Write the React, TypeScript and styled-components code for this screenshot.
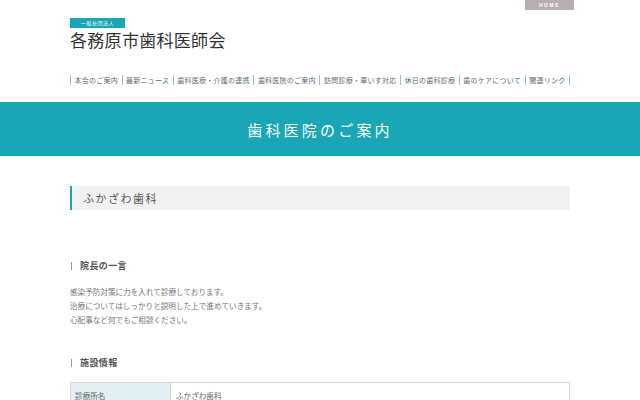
import styled, { createGlobalStyle } from "styled-components";

const teal = "#19a6b5";

const GlobalStyle = createGlobalStyle`
  html, body {
    margin: 0;
    padding: 0;
    background: #fff;
  }
  body {
    font-family: "Noto Sans CJK JP", "Noto Sans", sans-serif;
    color: #555;
  }
`;

const navItems = [
  "本会のご案内",
  "最新ニュース",
  "歯科医療・介護の連携",
  "歯科医院のご案内",
  "訪問診療・車いす対応",
  "休日の歯科診療",
  "歯のケアについて",
  "関連リンク",
];

const messageLines = [
  "感染予防対策に力を入れて診療しております。",
  "治療についてはしっかりと説明した上で進めていきます。",
  "心配事など何でもご相談ください。",
];

const Header = styled.header`
  width: 500px;
  margin: 0 auto;
`;

const TopRow = styled.div`
  display: flex;
  justify-content: space-between;
  align-items: flex-start;
`;

const Logo = styled.div`
  padding-top: 18px;
  display: flex;
  flex-direction: column;
  align-items: flex-start;
`;

const Badge = styled.span`
  display: block;
  width: 55px;
  height: 10px;
  line-height: 10px;
  background: ${teal};
  color: #fff;
  font-size: 5px;
  letter-spacing: 0.6px;
  text-align: center;
`;

const SiteTitle = styled.h1`
  margin: 2px 0 0;
  font-size: 17px;
  line-height: 20px;
  font-weight: 400;
  letter-spacing: 0.3px;
  color: #333;
`;

const HomeButton = styled.a`
  display: block;
  width: 49px;
  height: 10px;
  line-height: 10px;
  margin-right: -4px;
  background: #b8aeae;
  color: #fff;
  font-family: "Liberation Sans", sans-serif;
  font-size: 5px;
  font-weight: 700;
  letter-spacing: 1.5px;
  text-align: center;
`;

const Nav = styled.nav`
  display: flex;
  margin-top: 25px;
  border-right: 1px solid #7fcfd6;
`;

const NavItem = styled.a`
  flex: 1 1 auto;
  text-align: center;
  font-size: 7px;
  line-height: 10px;
  letter-spacing: 0.25px;
  color: #6a6a6a;
  border-left: 1px solid #7fcfd6;
  white-space: nowrap;
`;

const Band = styled.div`
  margin-top: 17px;
  height: 54px;
  background: ${teal};
  display: flex;
  align-items: center;
  justify-content: center;
`;

const BandTitle = styled.h2`
  margin: 0;
  color: #fff;
  font-size: 15px;
  font-weight: 400;
  letter-spacing: 3.2px;
`;

const Main = styled.main`
  width: 500px;
  margin: 30px auto 0;
`;

const ClinicName = styled.h3`
  margin: 0;
  height: 24px;
  line-height: 24px;
  background: #f1f1f1;
  border-left: 2px solid #1ba99f;
  padding-left: 11px;
  font-size: 11px;
  font-weight: 400;
  letter-spacing: 1.5px;
  color: #555;
`;

const SubHeading = styled.h4<{ $top: number }>`
  margin: ${(p) => p.$top}px 0 0;
  display: flex;
  align-items: center;
  gap: 8px;
  font-size: 9px;
  line-height: 10px;
  font-weight: 700;
  letter-spacing: 0.4px;
  color: #555;

  &::before {
    content: "";
    display: block;
    width: 1px;
    height: 8px;
    margin-left: 1px;
    background: #999;
  }
`;

const Message = styled.div`
  margin-top: 14px;
  font-size: 7.6px;
  line-height: 14px;
  color: #777;
`;

const InfoTable = styled.table`
  width: 100%;
  margin-top: 14px;
  border-collapse: collapse;
  table-layout: fixed;
  font-size: 7.6px;
  color: #666;
`;

const Th = styled.th`
  width: 91px;
  height: 24px;
  padding: 0 4px;
  text-align: left;
  font-weight: 400;
  background: #e0f0f3;
  border: 1px solid #d6d6d6;
`;

const Td = styled.td`
  padding: 0 5px;
  border: 1px solid #d6d6d6;
`;

export default function App() {
  return (
    <>
      <GlobalStyle />
      <Header>
        <TopRow>
          <Logo>
            <Badge>一般社団法人</Badge>
            <SiteTitle>各務原市歯科医師会</SiteTitle>
          </Logo>
          <HomeButton>HOME</HomeButton>
        </TopRow>
        <Nav>
          {navItems.map((item) => (
            <NavItem key={item}>{item}</NavItem>
          ))}
        </Nav>
      </Header>
      <Band>
        <BandTitle>歯科医院のご案内</BandTitle>
      </Band>
      <Main>
        <ClinicName>ふかざわ歯科</ClinicName>
        <SubHeading $top={51}>院長の一言</SubHeading>
        <Message>
          {messageLines.map((line) => (
            <div key={line}>{line}</div>
          ))}
        </Message>
        <SubHeading $top={31}>施設情報</SubHeading>
        <InfoTable>
          <tbody>
            <tr>
              <Th>診療所名</Th>
              <Td>ふかざわ歯科</Td>
            </tr>
          </tbody>
        </InfoTable>
      </Main>
    </>
  );
}
